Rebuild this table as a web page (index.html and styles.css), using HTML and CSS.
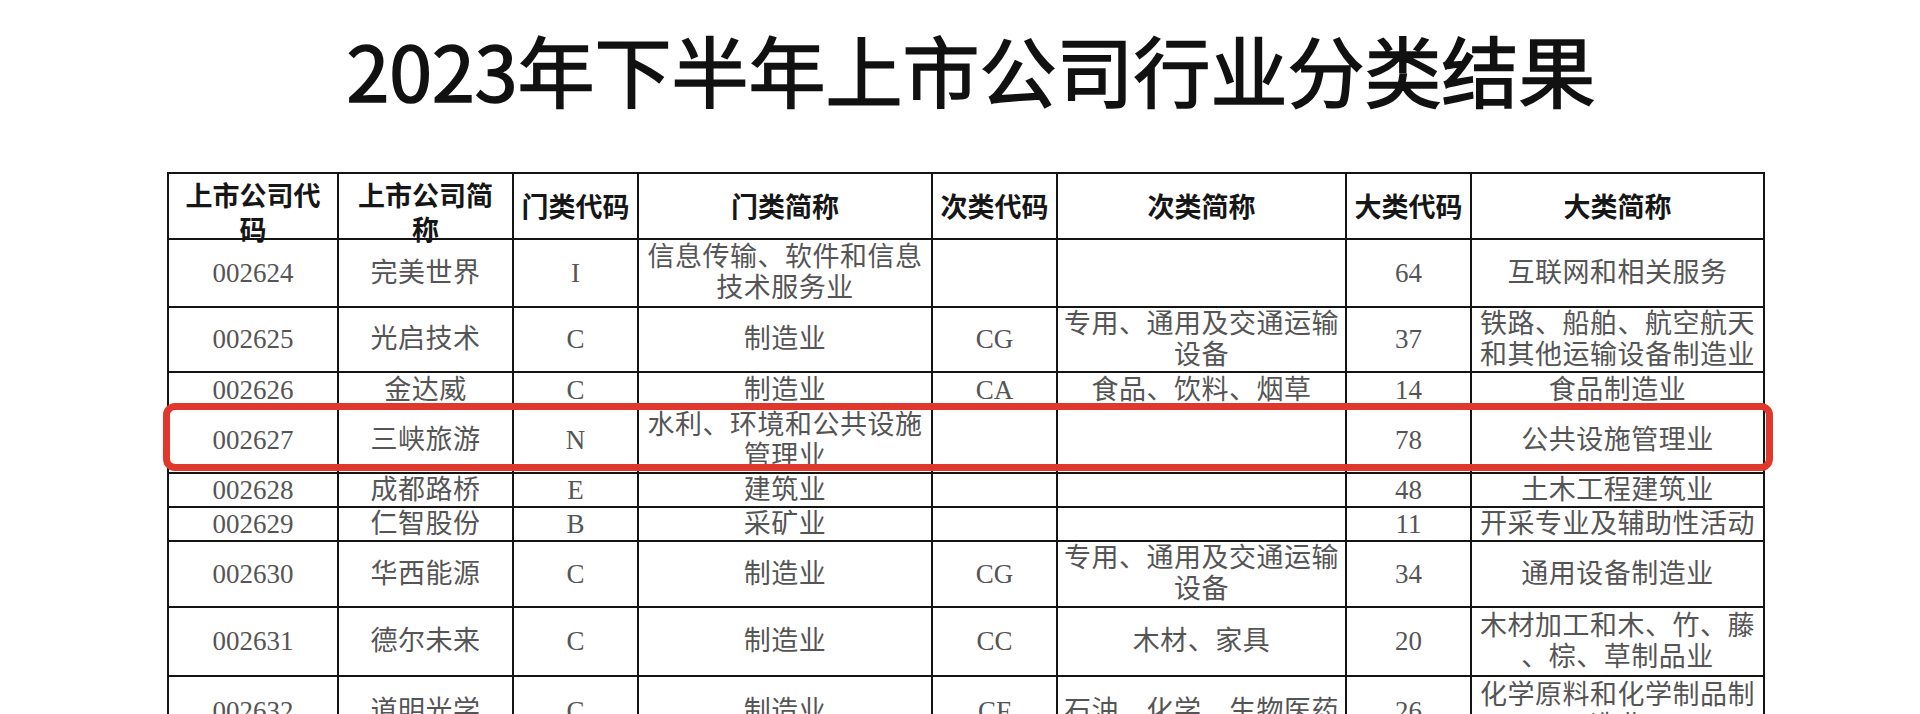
FILE: index.html
```html
<!DOCTYPE html>
<html lang="zh-CN">
<head>
<meta charset="utf-8">
<title>2023年下半年上市公司行业分类结果</title>
<link rel="stylesheet" href="styles.css">
</head>
<body>
<div class="page">
  <h1 class="title">2023年下半年上市公司行业分类结果</h1>
  <div class="table-wrap">
    <table class="result">
      <colgroup>
        <col class="c1"><col class="c2"><col class="c3"><col class="c4">
        <col class="c5"><col class="c6"><col class="c7"><col class="c8">
      </colgroup>
      <thead>
        <tr class="h-head">
          <th class="two"><div class="th-in">上市公司代<br>码</div></th>
          <th class="two"><div class="th-in">上市公司简<br>称</div></th>
          <th>门类代码</th>
          <th>门类简称</th>
          <th>次类代码</th>
          <th>次类简称</th>
          <th>大类代码</th>
          <th>大类简称</th>
        </tr>
      </thead>
      <tbody>
        <tr class="h68">
          <td class="num">002624</td><td>完美世界</td><td class="num">I</td>
          <td>信息传输、软件和信息<br>技术服务业</td><td></td><td></td>
          <td class="num">64</td><td>互联网和相关服务</td>
        </tr>
        <tr class="h65">
          <td class="num">002625</td><td>光启技术</td><td class="num">C</td>
          <td>制造业</td><td class="num">CG</td><td>专用、通用及交通运输<br>设备</td>
          <td class="num">37</td><td>铁路、船舶、航空航天<br>和其他运输设备制造业</td>
        </tr>
        <tr class="h36">
          <td class="num">002626</td><td>金达威</td><td class="num">C</td>
          <td>制造业</td><td class="num">CA</td><td>食品、饮料、烟草</td>
          <td class="num">14</td><td>食品制造业</td>
        </tr>
        <tr class="h65">
          <td class="num">002627</td><td>三峡旅游</td><td class="num">N</td>
          <td>水利、环境和公共设施<br>管理业</td><td></td><td></td>
          <td class="num">78</td><td>公共设施管理业</td>
        </tr>
        <tr class="h34">
          <td class="num">002628</td><td>成都路桥</td><td class="num">E</td>
          <td>建筑业</td><td></td><td></td>
          <td class="num">48</td><td>土木工程建筑业</td>
        </tr>
        <tr class="h34">
          <td class="num">002629</td><td>仁智股份</td><td class="num">B</td>
          <td>采矿业</td><td></td><td></td>
          <td class="num">11</td><td>开采专业及辅助性活动</td>
        </tr>
        <tr class="h66">
          <td class="num">002630</td><td>华西能源</td><td class="num">C</td>
          <td>制造业</td><td class="num">CG</td><td>专用、通用及交通运输<br>设备</td>
          <td class="num">34</td><td>通用设备制造业</td>
        </tr>
        <tr class="h69">
          <td class="num">002631</td><td>德尔未来</td><td class="num">C</td>
          <td>制造业</td><td class="num">CC</td><td>木材、家具</td>
          <td class="num">20</td><td>木材加工和木、竹、藤<br>、棕、草制品业</td>
        </tr>
        <tr class="h70">
          <td class="num">002632</td><td>道明光学</td><td class="num">C</td>
          <td>制造业</td><td class="num">CF</td><td>石油、化学、生物医药</td>
          <td class="num">26</td><td>化学原料和化学制品制<br>造业</td>
        </tr>
      </tbody>
    </table>
    <div class="highlight"></div>
  </div>
</div>
</body>
</html>
```

FILE: styles.css
```css
html, body {
  margin: 0;
  padding: 0;
  background: #ffffff;
}

.page {
  width: 1920px;
  height: 714px;
  overflow: hidden;
}

.title {
  margin: 0 0 61px 0;
  padding: 27px 0 0 22px;
  height: 84px;
  line-height: 84px;
  text-align: center;
  font-family: "Noto Sans CJK SC", sans-serif;
  font-size: 77px;
  font-weight: 400;
  -webkit-text-stroke: 1.6px #111111;
  color: #111111;
  white-space: nowrap;
}

.table-wrap {
  position: relative;
  margin-left: 167px;
  width: 1596px;
}

.result {
  border-collapse: collapse;
  table-layout: fixed;
  width: 1596px;
}

.c1 { width: 170px; }
.c2 { width: 175px; }
.c3 { width: 125px; }
.c4 { width: 294px; }
.c5 { width: 125px; }
.c6 { width: 289px; }
.c7 { width: 125px; }
.c8 { width: 293px; }

.result th,
.result td {
  border: 2px solid #141414;
  padding: 0;
  text-align: center;
  vertical-align: middle;
  white-space: nowrap;
  overflow: visible;
}

.result th {
  font-family: "Noto Sans CJK SC", sans-serif;
  font-weight: 700;
  font-size: 27px;
  line-height: 34px;
  color: #161616;
}

.result th.two {
  vertical-align: top;
}

.th-in {
  height: 56px;
  padding-top: 4px;
  line-height: 34px;
  overflow: visible;
}

.result td {
  font-family: "Liberation Serif", "Noto Sans CJK SC", serif;
  font-weight: 400;
  font-size: 27px;
  letter-spacing: 0.5px;
  line-height: 31px;
  color: #555555;
}

.result td.num {
  letter-spacing: 0;
}

.h-head { height: 66px; }
.h68 { height: 68px; }
.h65 { height: 65px; }
.h66 { height: 66px; }
.h69 { height: 69px; }
.h70 { height: 70px; }
.h36 { height: 36px; }
.h34 { height: 34px; }

.highlight {
  position: absolute;
  left: -4px;
  top: 231px;
  width: 1610px;
  height: 68px;
  box-sizing: border-box;
  border: 7px solid #e0382c;
  border-radius: 12px;
}
```
